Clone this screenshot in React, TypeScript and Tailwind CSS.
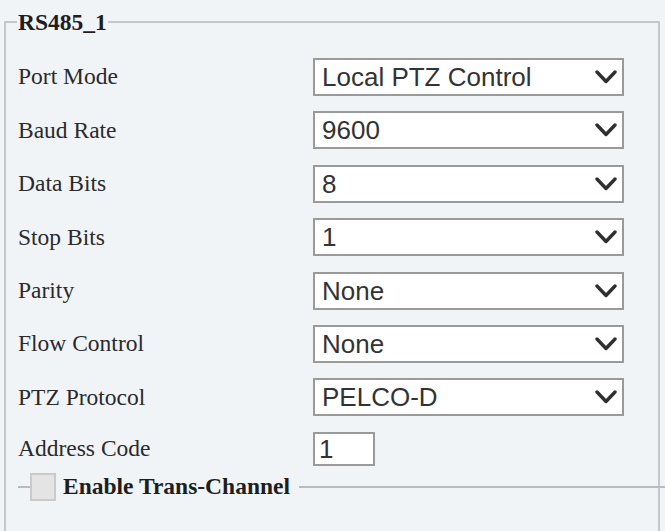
import React from "react";

const Chevron = () => (
  <svg width="22" height="14" viewBox="0 0 22 14" className="shrink-0">
    <polyline points="2,2 11,11.5 20,2" fill="none" stroke="#2f2f2f" strokeWidth="3.4" strokeLinecap="round" strokeLinejoin="round" />
  </svg>
);

const rows: { label: string; value: string }[] = [
  { label: "Port Mode", value: "Local PTZ Control" },
  { label: "Baud Rate", value: "9600" },
  { label: "Data Bits", value: "8" },
  { label: "Stop Bits", value: "1" },
  { label: "Parity", value: "None" },
  { label: "Flow Control", value: "None" },
  { label: "PTZ Protocol", value: "PELCO-D" },
];

const serif = { fontFamily: '"Liberation Serif", "Times New Roman", serif' };
const sans = { fontFamily: '"Liberation Sans", Arial, sans-serif' };

export default function App() {
  return (
    <div className="w-[665px] h-[531px] overflow-hidden bg-[#f1f4f7]">
      <fieldset className="ml-[4px] mt-[9px] w-[656px] h-[600px] border-2 border-[#c4c8cc] pl-[12px] pr-[34px] pt-[23px]">
        <legend
          className="-ml-[1px] px-[1px] text-[23.5px] leading-[26px] font-bold text-[#1e1e1e]"
          style={serif}
        >
          RS485_1
        </legend>
        <div className="flex flex-col gap-[15.4px]">
          {rows.map((r) => (
            <div key={r.label} className="flex items-center h-[38px]">
              <div className="w-[295px] text-[23.5px] text-[#2a2a2a]" style={serif}>
                {r.label}
              </div>
              <div className="w-[311px] h-[38px] bg-white border-2 border-[#9a9a9a] flex items-center justify-between pl-[7px] pr-[5px]">
                <span className="text-[26px] leading-none text-[#333]" style={sans}>
                  {r.value}
                </span>
                <Chevron />
              </div>
            </div>
          ))}
          <div className="flex items-center h-[34px]">
            <div className="w-[295px] text-[23.5px] text-[#2a2a2a]" style={serif}>
              Address Code
            </div>
            <div className="w-[62px] h-[34px] bg-white border-2 border-[#9a9a9a] flex items-center pl-[4px]">
              <span className="text-[26px] leading-none text-[#333]" style={sans}>
                1
              </span>
            </div>
          </div>
        </div>
        <div className="flex items-center mt-[7px] -mr-[41px] h-[28px]">
          <div className="w-[12px] h-[2px] bg-[#b8bcc0]" />
          <div className="w-[26px] h-[28px] bg-[#e4e4e4] border-2 border-[#cacaca]" />
          <div className="ml-[7px] text-[23.5px] font-bold text-[#1e1e1e] leading-none" style={serif}>
            Enable Trans-Channel
          </div>
          <div className="ml-[9px] flex-1 h-[2px] bg-[#b8bcc0]" />
        </div>
      </fieldset>
    </div>
  );
}
